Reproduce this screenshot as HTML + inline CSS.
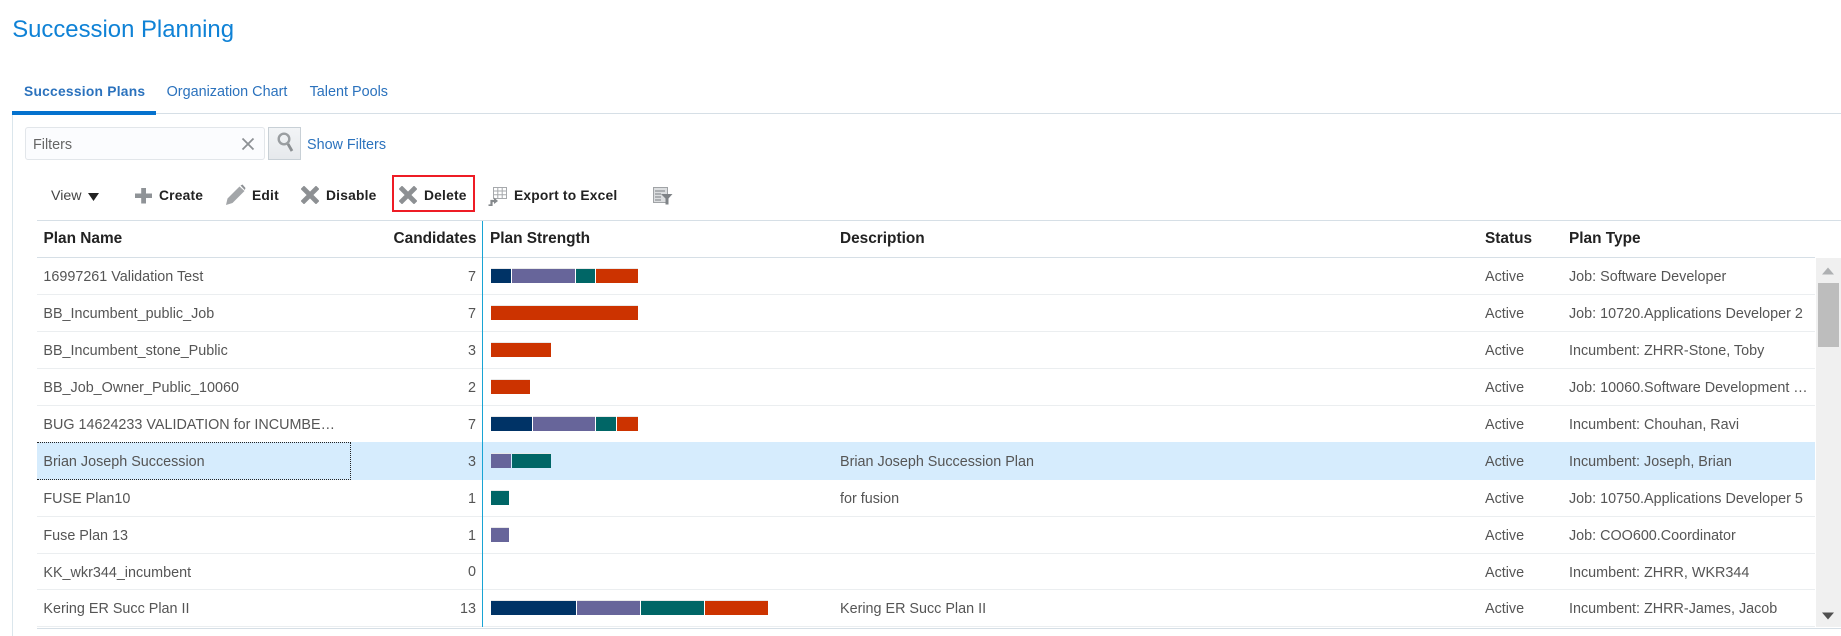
<!DOCTYPE html>
<html><head><meta charset="utf-8"><style>
html,body{margin:0;padding:0;background:#fff}
#p{position:relative;width:1841px;height:636px;overflow:hidden;font-family:"Liberation Sans",Arial,sans-serif;font-size:14.36px;color:#555}
.a{position:absolute;white-space:nowrap}
.tb{font-weight:bold;font-size:13.8px;letter-spacing:.2px;color:#222;line-height:20px;top:186px}
.th{font-weight:bold;font-size:15.4px;color:#222;line-height:20px;top:229px}
.r{position:absolute;left:37px;width:1778px;height:36px;border-bottom:1px solid #ebeef0;box-sizing:content-box}
.r span{position:absolute;white-space:nowrap;line-height:20px;top:9px}
.n{left:6.4px}.c{right:1339px;text-align:right}.d{left:803px}.s{left:1448px}.t{left:1532px}
.r i{position:absolute;top:10px;height:14px;border-top:1px solid #e9e9e9;box-sizing:content-box}
.b1{background:#003366}.b2{background:#67659a}.b3{background:#006666}.b4{background:#cc3300}
</style></head><body><div id="p">
<div class="a" style="left:12.2px;top:15px;font-size:23.9px;line-height:30px;color:#0f82d6">Succession Planning</div>

<div class="a" style="left:24px;top:82px;font-size:13.8px;letter-spacing:.25px;line-height:20px;font-weight:bold;color:#2b72bd">Succession Plans</div>
<div class="a" style="left:166.6px;top:82px;font-size:14.4px;line-height:20px;color:#2b72bd">Organization Chart</div>
<div class="a" style="left:309.6px;top:82px;font-size:14.4px;line-height:20px;color:#2b72bd">Talent Pools</div>
<div class="a" style="left:12px;top:113px;width:1829px;height:1px;background:#d6dfe6"></div>
<div class="a" style="left:12px;top:111px;width:144px;height:4px;background:#0572ce"></div>
<div class="a" style="left:12px;top:115px;width:1px;height:521px;background:#dbe6ec"></div>

<div class="a" style="left:25px;top:127px;width:240px;height:33px;box-sizing:border-box;background:#fbfcfe;border:1px solid #e2e6ea;border-radius:3px"></div>
<div class="a" style="left:33px;top:135px;line-height:20px;color:#666">Filters</div>
<svg class="a" style="left:241px;top:137px" width="14" height="14"><path d="M1.5 1.5L12.5 12.5M12.5 1.5L1.5 12.5" stroke="#8d9195" stroke-width="1.8"/></svg>
<div class="a" style="left:268px;top:127px;width:33px;height:33px;box-sizing:border-box;background:linear-gradient(#f2f4f6,#e6e9ec);border:1px solid #c8d0d6"></div>
<svg class="a" style="left:276px;top:131px" width="20" height="24"><circle cx="8" cy="8" r="5.3" fill="none" stroke="#9a9ea1" stroke-width="2.4"/><path d="M12 13L16 20" stroke="#8c9093" stroke-width="2.8"/></svg>
<div class="a" style="left:307px;top:135px;line-height:20px;color:#2b72bd">Show Filters</div>

<div class="a" style="left:51px;top:186px;line-height:20px;font-size:14.2px;color:#444">View</div>
<svg class="a" style="left:88px;top:193px" width="11" height="8"><path d="M0 0H11L5.5 8Z" fill="#222"/></svg>
<svg class="a" style="left:135px;top:187px" width="18" height="18"><path d="M6.2 1H11V6.5H17V11H11V16.5H6.2V11H0V6.5H6.2Z" fill="#8f9397"/></svg>
<div class="a tb" style="left:159px">Create</div>
<svg class="a" style="left:225px;top:184px" width="21" height="22"><path d="M1 21L2.5 14.5L14.5 2.5L19.5 7L7.5 19Z" fill="#a3a6a9"/><path d="M15.5 1.5L17.5 0.5L20.5 4L19.8 6Z" fill="#8d9195"/></svg>
<div class="a tb" style="left:252px">Edit</div>
<svg class="a" style="left:301px;top:186px" width="18" height="18"><path d="M3 3L15 15M15 3L3 15" stroke="#8d9093" stroke-width="4.8" stroke-linecap="square"/></svg>
<div class="a tb" style="left:326px">Disable</div>
<div class="a" style="left:392px;top:175px;width:83px;height:37px;box-sizing:border-box;border:2px solid #ee1c25"></div>
<svg class="a" style="left:399px;top:186px" width="18" height="18"><path d="M3 3L15 15M15 3L3 15" stroke="#8d9093" stroke-width="4.8" stroke-linecap="square"/></svg>
<div class="a tb" style="left:424px">Delete</div>
<svg class="a" style="left:488px;top:186px" width="19" height="20"><path d="M5.5 1.5H18.5V12.5H5.5ZM5.5 5H18.5M5.5 8.7H18.5M9.8 1.5V12.5M14.2 1.5V12.5" fill="none" stroke="#a6a9ac"/><path d="M0.5 19.5H3.5V15H8" fill="none" stroke="#85898c" stroke-width="2.2"/><path d="M6 11.5L10 15L6 18Z" fill="#85898c"/></svg>
<div class="a tb" style="left:514px">Export to Excel</div>
<svg class="a" style="left:653px;top:187px" width="20" height="18"><path d="M0.5 0.5H14.5V15.5H0.5Z" fill="#dcdee0" stroke="#a0a3a6"/><path d="M2 4H12M2 7H8M2 10H8M2 13H8" stroke="#8f9396" stroke-width="1.3"/><path d="M8 7H19.5L15.5 11.5V17.5H12.5V11.5Z" fill="#7f8387"/></svg>

<div class="a" style="left:37px;top:220px;width:1804px;height:1px;background:#d6dfe6"></div>
<div class="a" style="left:37px;top:257px;width:1778px;height:1px;background:#d6dfe6"></div>
<div class="a th" style="left:43.5px">Plan Name</div>
<div class="a th" style="left:392px;width:84.5px;text-align:right">Candidates</div>
<div class="a th" style="left:490px">Plan Strength</div>
<div class="a th" style="left:840px">Description</div>
<div class="a th" style="left:1485px">Status</div>
<div class="a th" style="left:1569px">Plan Type</div>

<div class="r" style="top:258px"><span class="n">16997261 Validation Test</span><span class="c">7</span><i class="b1" style="left:454px;width:20px"></i><i class="b2" style="left:475px;width:63px"></i><i class="b3" style="left:539px;width:19px"></i><i class="b4" style="left:559px;width:42px"></i><span class="s">Active</span><span class="t">Job: Software Developer</span></div>
<div class="r" style="top:295px"><span class="n">BB_Incumbent_public_Job</span><span class="c">7</span><i class="b4" style="left:454px;width:147px"></i><span class="s">Active</span><span class="t">Job: 10720.Applications Developer 2</span></div>
<div class="r" style="top:332px"><span class="n">BB_Incumbent_stone_Public</span><span class="c">3</span><i class="b4" style="left:454px;width:60px"></i><span class="s">Active</span><span class="t">Incumbent: ZHRR-Stone, Toby</span></div>
<div class="r" style="top:369px"><span class="n">BB_Job_Owner_Public_10060</span><span class="c">2</span><i class="b4" style="left:454px;width:39px"></i><span class="s">Active</span><span class="t">Job: 10060.Software Development …</span></div>
<div class="r" style="top:406px"><span class="n">BUG 14624233 VALIDATION for INCUMBE…</span><span class="c">7</span><i class="b1" style="left:454px;width:41px"></i><i class="b2" style="left:496px;width:62px"></i><i class="b3" style="left:559px;width:20px"></i><i class="b4" style="left:580px;width:21px"></i><span class="s">Active</span><span class="t">Incumbent: Chouhan, Ravi</span></div>
<div class="r" style="top:443px;height:37px;border:0;background:#d6ecfd;box-shadow:0 -1px #d6ecfd"><span class="n">Brian Joseph Succession</span><span class="c">3</span><i class="b2" style="left:454px;width:20px"></i><i class="b3" style="left:475px;width:39px"></i><span class="d">Brian Joseph Succession Plan</span><span class="s">Active</span><span class="t">Incumbent: Joseph, Brian</span></div>
<div class="a" style="left:37px;top:442px;width:314px;height:38px;box-sizing:border-box;border:1px dotted #222;border-left:0"></div>
<div class="r" style="top:481px;height:35px"><span class="n" style="top:8px">FUSE Plan10</span><span class="c" style="top:8px">1</span><i class="b3" style="left:454px;width:18px;top:9px"></i><span class="d" style="top:8px">for fusion</span><span class="s" style="top:8px">Active</span><span class="t" style="top:8px">Job: 10750.Applications Developer 5</span></div>
<div class="r" style="top:517px;height:36px"><span class="n">Fuse Plan 13</span><span class="c">1</span><i class="b2" style="left:454px;width:18px"></i><span class="s">Active</span><span class="t">Job: COO600.Coordinator</span></div>
<div class="r" style="top:554px;height:35px"><span class="n">KK_wkr344_incumbent</span><span class="c" style="top:8px">0</span><span class="s">Active</span><span class="t">Incumbent: ZHRR, WKR344</span></div>
<div class="r" style="top:590px;height:36px"><span class="n">Kering ER Succ Plan II</span><span class="c">13</span><i class="b1" style="left:454px;width:85px"></i><i class="b2" style="left:540px;width:63px"></i><i class="b3" style="left:604px;width:63px"></i><i class="b4" style="left:668px;width:63px"></i><span class="d">Kering ER Succ Plan II</span><span class="s">Active</span><span class="t">Incumbent: ZHRR-James, Jacob</span></div>
<div class="a" style="left:37px;top:628px;width:1804px;height:1px;background:#d6dfe6"></div>
<div class="a" style="left:482px;top:221px;width:1px;height:406px;background:#18a4d4"></div>

<div class="a" style="left:1816px;top:258px;width:25px;height:369px;background:#f0f0f0"></div>
<div class="a" style="left:1818px;top:283px;width:21px;height:64px;background:#bdbdbd"></div>
<svg class="a" style="left:1822px;top:267px" width="13" height="8"><path d="M0 7.5H12L6 0.5Z" fill="#aeb0b2"/></svg>
<svg class="a" style="left:1822px;top:612px" width="13" height="8"><path d="M0 0.5H12L6 7.5Z" fill="#505050"/></svg>
</div></body></html>
